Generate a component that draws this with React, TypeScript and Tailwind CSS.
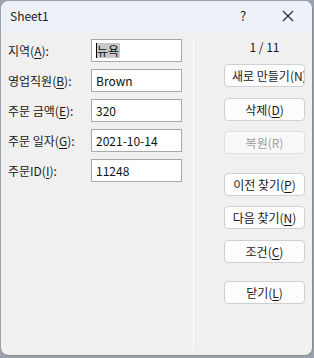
import React from "react";

const font = { fontFamily: '"Segoe UI", "Noto Sans CJK KR", "Noto Sans", sans-serif' };

function U({ c }: { c: string }) {
  return <span className="underline underline-offset-2">{c}</span>;
}

function Btn({
  children,
  top,
  disabled,
  left,
}: {
  children: React.ReactNode;
  top: string;
  disabled?: boolean;
  left?: boolean;
}) {
  return (
    <div
      className={`${top} h-[23px] w-[81px] rounded-[4px] border flex items-center overflow-hidden whitespace-nowrap text-[12px] ${
        left ? "justify-start pl-[7px]" : "justify-center"
      } ${
        disabled
          ? "border-[#e0e0e0] bg-[#f9f9f9] text-[#9d9d9d]"
          : "border-[#d0d0d0] bg-[#fdfdfd] text-[#1a1a1a]"
      }`}
    >
      {children}
    </div>
  );
}

function Row({ label, value, top, selected }: { label: React.ReactNode; value: string; top: string; selected?: boolean }) {
  return (
    <div className={`${top} flex items-center h-[23px]`}>
      <div className="w-[90px] pl-[7px] text-[12px] text-[#1a1a1a] whitespace-nowrap">{label}</div>
      <div className="w-[91px] h-[23px] border border-[#a8a8a8] bg-white flex items-center pl-[4px] text-[12px] text-[#111]">
        {selected ? (
          <span className="relative bg-[#c8c8c8] px-[1px] leading-[15px]">
            <span className="absolute left-0 top-0 w-px h-[15px] bg-black" />
            {value}
          </span>
        ) : (
          <span>{value}</span>
        )}
      </div>
    </div>
  );
}

export default function App() {
  return (
    <div className="w-[314px] h-[358px] bg-[#9aa3ad] overflow-hidden" style={font}>
      <div className="ml-[1px] mt-px w-[312px] h-[355px] rounded-t-[8px] rounded-b-[8px] border-r border-b border-[#8c8c8c] bg-[#f0f0f0] overflow-hidden flex flex-col">
        <div className="h-[30px] bg-[#eef2f8] flex items-center text-[12px] text-[#1a1a1a]">
          <span className="pl-[9px] flex-1">Sheet1</span>
          <span className="w-[20px] text-center mr-[25px] text-[13px]">?</span>
          <span className="w-[20px] flex justify-center mr-[14px]">
            <svg width="12" height="12" viewBox="0 0 12 12">
              <path d="M1 1 L11 11 M11 1 L1 11" stroke="#222" strokeWidth="1.1" />
            </svg>
          </span>
        </div>
        <div className="flex flex-1">
          <div className="w-[192px] flex flex-col pt-[8px]">
            <Row top="" label={<>지역(<U c="A" />):</>} value="뉴욕" selected />
            <Row top="mt-[7px]" label={<>영업직원(<U c="B" />):</>} value="Brown" />
            <Row top="mt-[7px]" label={<>주문 금액(<U c="E" />):</>} value="320" />
            <Row top="mt-[7px]" label={<>주문 일자(<U c="G" />):</>} value="2021-10-14" />
            <Row top="mt-[7px]" label={<>주문ID(<U c="I" />):</>} value="11248" />
          </div>
          <div className="w-px bg-white mt-[9px] mb-[5px]" />
          <div className="w-[7px] flex">
            <div className="ml-[7px] mt-[26px] w-[2px] h-[23px] bg-[#8a8a8a]" />
          </div>
          <div className="flex flex-col pl-[23px] pt-[8px]">
            <div className="w-[81px] text-center text-[12px] text-[#1a1a1a] leading-[16px]">1 / 11</div>
            <Btn top="mt-[9px]" left>새로 만들기(N)</Btn>
            <Btn top="mt-[11px]">삭제(<U c="D" />)</Btn>
            <Btn top="mt-[10px]" disabled>복원(R)</Btn>
            <Btn top="mt-[19px]">이전 찾기(<U c="P" />)</Btn>
            <Btn top="mt-[10px]">다음 찾기(<U c="N" />)</Btn>
            <Btn top="mt-[11px]">조건(<U c="C" />)</Btn>
            <Btn top="mt-[18px]">닫기(<U c="L" />)</Btn>
          </div>
        </div>
      </div>
    </div>
  );
}
